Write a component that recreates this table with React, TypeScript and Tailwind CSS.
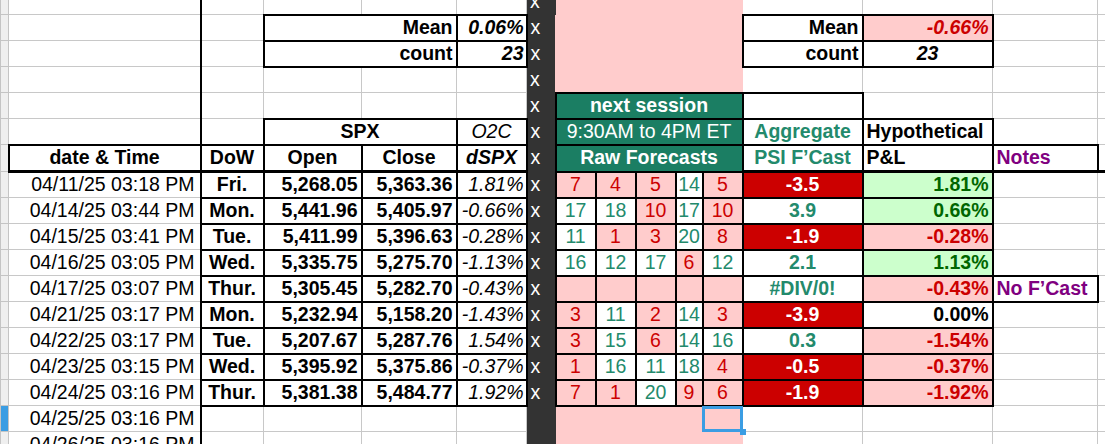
import React from 'react';

// cell styles
const GRID = 'border border-[#c8c8c8]';
const BOX = 'border-2 border-black';
const COL_A = 'border border-[#c8c8c8] border-r-2 border-r-black';
const STRIP = 'bg-[#efefef] border border-[#c4c4c4]';
const DARK = 'bg-[#333333] border border-[#333333] text-white text-left pl-[3px]';
const PINK = 'bg-[#ffcccc] border border-[#ffcccc]';
const GREEN = 'bg-[#1b7e63] text-white text-center border-2 border-black';
const TEAL = 'text-[#238a6c]';
const HDR = 'border-2 border-black border-b-[3px] font-bold';

const widths = ['w-[8px]', 'w-[192px]', 'w-[63px]', 'w-[98px]', 'w-[95px]', 'w-[70px]', 'w-[29px]', 'w-[40px]', 'w-[40px]', 'w-[40px]', 'w-[27px]', 'w-[40px]', 'w-[120px]', 'w-[130px]', 'w-[105px]', 'w-[8px]'];

const rows = [
  { date: '04/11/25 03:18 PM', dow: 'Fri.', open: '5,268.05', close: '5,363.36', d: '1.81%', fc: [7, 4, 5, 14, 5], agg: '-3.5', pl: '1.81%', note: '' },
  { date: '04/14/25 03:44 PM', dow: 'Mon.', open: '5,441.96', close: '5,405.97', d: '-0.66%', fc: [17, 18, 10, 17, 10], agg: '3.9', pl: '0.66%', note: '' },
  { date: '04/15/25 03:41 PM', dow: 'Tue.', open: '5,411.99', close: '5,396.63', d: '-0.28%', fc: [11, 1, 3, 20, 8], agg: '-1.9', pl: '-0.28%', note: '' },
  { date: '04/16/25 03:05 PM', dow: 'Wed.', open: '5,335.75', close: '5,275.70', d: '-1.13%', fc: [16, 12, 17, 6, 12], agg: '2.1', pl: '1.13%', note: '' },
  { date: '04/17/25 03:07 PM', dow: 'Thur.', open: '5,305.45', close: '5,282.70', d: '-0.43%', fc: null, agg: '#DIV/0!', pl: '-0.43%', note: 'No F’Cast' },
  { date: '04/21/25 03:17 PM', dow: 'Mon.', open: '5,232.94', close: '5,158.20', d: '-1.43%', fc: [3, 11, 2, 14, 3], agg: '-3.9', pl: '0.00%', note: '' },
  { date: '04/22/25 03:17 PM', dow: 'Tue.', open: '5,207.67', close: '5,287.76', d: '1.54%', fc: [3, 15, 6, 14, 16], agg: '0.3', pl: '-1.54%', note: '' },
  { date: '04/23/25 03:15 PM', dow: 'Wed.', open: '5,395.92', close: '5,375.86', d: '-0.37%', fc: [1, 16, 11, 18, 4], agg: '-0.5', pl: '-0.37%', note: '' },
  { date: '04/24/25 03:16 PM', dow: 'Thur.', open: '5,381.38', close: '5,484.77', d: '1.92%', fc: [7, 1, 20, 9, 6], agg: '-1.9', pl: '-1.92%', note: '' },
];

const Sheet = () => {
  return (
    <div className="w-[1105px] h-[444px] overflow-hidden bg-white font-['Liberation_Sans',Arial,sans-serif] text-[19.5px] leading-none text-black">
      <table className="-mt-[12px] w-[1105px] table-fixed border-collapse">
        <colgroup>
          {widths.map((w, i) => (
            <col key={i} className={w} />
          ))}
        </colgroup>
        <tbody>
          {/* partial top row */}
          <tr className="h-[26px]">
            <td className={STRIP} />
            <td className={COL_A} />
            <td className={GRID} />
            <td className={GRID} />
            <td className={GRID} />
            <td className={GRID} />
            <td className={DARK}>x</td>
            <td colSpan={5} rowSpan={4} className={PINK} />
            <td className={GRID} />
            <td className={GRID} />
            <td className={GRID} />
            <td className={GRID} />
          </tr>

          {/* Mean */}
          <tr className="h-[26px]">
            <td className={STRIP} />
            <td className={COL_A} />
            <td className={GRID} />
            <td colSpan={2} className={`${BOX} text-right pr-[3px] font-bold`}>Mean</td>
            <td className={`${BOX} text-right pr-[2px] font-bold italic`}>0.06%</td>
            <td className={DARK}>x</td>
            <td className={`${BOX} text-right pr-[3px] font-bold`}>Mean</td>
            <td className={`${BOX} bg-[#ffcccc] text-[#cc0000] text-right pr-[3px] font-bold italic`}>-0.66%</td>
            <td className={GRID} />
            <td className={GRID} />
          </tr>

          {/* count */}
          <tr className="h-[26px]">
            <td className={STRIP} />
            <td className={COL_A} />
            <td className={GRID} />
            <td colSpan={2} className={`${BOX} text-right pr-[3px] font-bold`}>count</td>
            <td className={`${BOX} text-right pr-[2px] font-bold italic`}>23</td>
            <td className={DARK}>x</td>
            <td className={`${BOX} text-right pr-[3px] font-bold`}>count</td>
            <td className={`${BOX} text-center font-bold italic`}>23</td>
            <td className={GRID} />
            <td className={GRID} />
          </tr>

          {/* empty */}
          <tr className="h-[26px]">
            <td className={STRIP} />
            <td className={COL_A} />
            <td className={GRID} />
            <td className={GRID} />
            <td className={GRID} />
            <td className={GRID} />
            <td className={DARK}>x</td>
            <td className={GRID} />
            <td className={GRID} />
            <td className={GRID} />
            <td className={GRID} />
          </tr>

          {/* next session */}
          <tr className="h-[26px]">
            <td className={STRIP} />
            <td className={COL_A} />
            <td className={GRID} />
            <td className={GRID} />
            <td className={GRID} />
            <td className={GRID} />
            <td className={DARK}>x</td>
            <td colSpan={5} className={`${GREEN} font-bold`}>next session</td>
            <td className={BOX} />
            <td className={GRID} />
            <td className={GRID} />
            <td className={GRID} />
          </tr>

          {/* SPX / O2C */}
          <tr className="h-[26px]">
            <td className={STRIP} />
            <td className={COL_A} />
            <td className={GRID} />
            <td colSpan={2} className={`${BOX} text-center font-bold`}>SPX</td>
            <td className={`${BOX} text-center italic`}>O2C</td>
            <td className={DARK}>x</td>
            <td colSpan={5} className={GREEN}>9:30AM to 4PM ET</td>
            <td className={`${BOX} ${TEAL} text-center font-bold`}>Aggregate</td>
            <td className={`${BOX} text-left pl-[3px] font-bold`}>Hypothetical</td>
            <td className={GRID} />
            <td className={GRID} />
          </tr>

          {/* column headers */}
          <tr className="h-[27px]">
            <td className={STRIP} />
            <td className={`${HDR} text-center`}>date &amp; Time</td>
            <td className={`${HDR} text-center`}>DoW</td>
            <td className={`${HDR} text-center`}>Open</td>
            <td className={`${HDR} text-center`}>Close</td>
            <td className={`${HDR} text-center italic`}>dSPX</td>
            <td className={DARK}>x</td>
            <td colSpan={5} className={`${GREEN} font-bold`}>Raw Forecasts</td>
            <td className={`${HDR} ${TEAL} text-center`}>PSI F’Cast</td>
            <td className={`${HDR} text-left pl-[3px]`}>P&amp;L</td>
            <td className={`${HDR} text-left pl-[3px] text-[#800080]`}>Notes</td>
            <td className={`${GRID} border-b-[3px] border-b-black`} />
          </tr>

          {rows.map((r, i) => {
            const aggNeg = r.agg.startsWith('-');
            const plCls = r.pl.startsWith('-')
              ? 'bg-[#ffcccc] text-[#cc0000]'
              : r.pl === '0.00%'
              ? 'bg-white text-black'
              : 'bg-[#ccffcc] text-[#006600]';
            return (
              <tr key={i} className="h-[26px]">
                <td className={STRIP} />
                <td className={`${COL_A} text-right pr-[5px] whitespace-nowrap`}>{r.date}</td>
                <td className={`${BOX} text-center font-bold`}>{r.dow}</td>
                <td className={`${BOX} text-right pr-[3px] font-bold`}>{r.open}</td>
                <td className={`${BOX} text-right pr-[3px] font-bold`}>{r.close}</td>
                <td className={`${BOX} text-right pr-[2px] italic`}>{r.d}</td>
                <td className={DARK}>x</td>
                {r.fc
                  ? r.fc.map((v, j) => (
                      <td
                        key={j}
                        className={`${BOX} text-center ${v <= 10 ? 'bg-[#ffcccc] text-[#cc0000]' : 'bg-white text-[#238a6c]'}`}
                      >
                        {v}
                      </td>
                    ))
                  : [0, 1, 2, 3, 4].map(j => <td key={j} className={`${BOX} bg-[#ffcccc]`} />)}
                <td
                  className={`${BOX} text-center font-bold ${aggNeg ? 'bg-[#cc0000] text-white' : `bg-white ${TEAL}`}`}
                >
                  {r.agg}
                </td>
                <td className={`${BOX} ${plCls} text-right pr-[3px] font-bold`}>{r.pl}</td>
                {r.note ? (
                  <td className={`${BOX} text-left pl-[3px] font-bold text-[#800080] whitespace-nowrap`}>{r.note}</td>
                ) : (
                  <td className={GRID} />
                )}
                <td className={GRID} />
              </tr>
            );
          })}

          {/* selected row */}
          <tr className="h-[26px]">
            <td className="bg-[#3b9de3] border border-[#c4c4c4]" />
            <td className={`${COL_A} text-right pr-[5px] whitespace-nowrap`}>04/25/25 03:16 PM</td>
            <td className={GRID} />
            <td className={GRID} />
            <td className={GRID} />
            <td className={GRID} />
            <td className={DARK} />
            <td colSpan={4} className={PINK} />
            <td className={`${PINK} relative`}>
              <div className="absolute -inset-px border-[3px] border-[#3b9de3]" />
              <div className="absolute right-[-4px] bottom-[-4px] w-[6px] h-[6px] bg-[#3b9de3]" />
            </td>
            <td className={GRID} />
            <td className={GRID} />
            <td className={GRID} />
            <td className={GRID} />
          </tr>

          <tr className="h-[26px]">
            <td className={STRIP} />
            <td className={`${COL_A} text-right pr-[5px] whitespace-nowrap`}>04/26/25 03:16 PM</td>
            <td className={GRID} />
            <td className={GRID} />
            <td className={GRID} />
            <td className={GRID} />
            <td className={DARK} />
            <td colSpan={5} className={PINK} />
            <td className={GRID} />
            <td className={GRID} />
            <td className={GRID} />
            <td className={GRID} />
          </tr>
        </tbody>
      </table>
    </div>
  );
};

export default Sheet;
